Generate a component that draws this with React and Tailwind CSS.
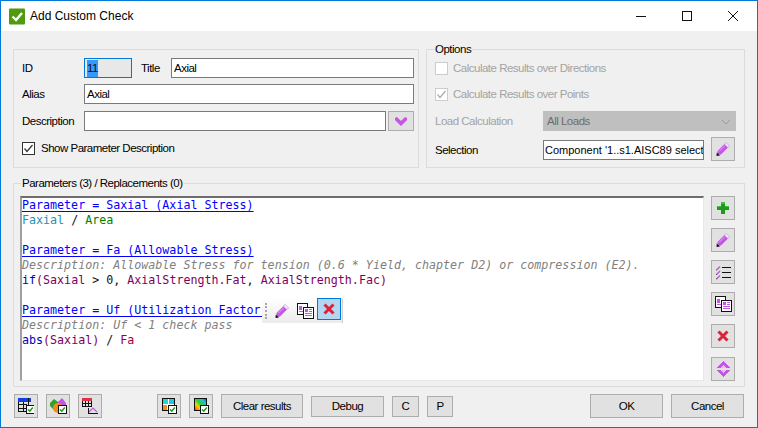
const UI = { fontFamily: '"Liberation Sans", Arial, sans-serif' };

const Pencil = () => (
  <svg width="16" height="16" viewBox="0 0 16 16">
    <path d="M2.500 10 9.500 3 13 6.500 6 13.500 2.500 14Z" fill="#c455e6" />
    <path d="M4 10.500 10 4.500" stroke="#e3a6f5" strokeWidth="1" />
    <path d="M9.500 3 11 1.500 14.500 5 13 6.500Z" fill="#fff" stroke="#c98ae0" strokeWidth=".8" />
    <path d="M1.500 15 1.800 11.500 5 14.500Z" fill="#111" />
  </svg>
);
const Plus = () => (
  <svg width="16" height="16" viewBox="0 0 16 16" shapeRendering="crispEdges">
    <path d="M6 2h4v4h4v4h-4v4H6v-4H2V6h4Z" fill="#1f9a1f" />
    <path d="M6 2h4v2H6ZM2 6h4v1H2ZM10 6h4v1h-4Z" fill="#3ec43e" />
  </svg>
);
const ListIcon = () => (
  <svg width="16" height="16" viewBox="0 0 16 16">
    <path d="M1.500 5 4.500 2 5.500 3 2.500 6Z M1.500 9.500 4.500 6.500 5.500 7.500 2.500 10.500Z M1.500 14 4.500 11 5.500 12 2.500 15Z" fill="#c455e6" />
    <path d="M1 5 1.500 6.500 2.500 6Z M1 9.500 1.500 11 2.500 10.500Z M1 14 1.500 15.500 2.500 15Z" fill="#111" />
    <path d="M7 3h9M7 8h9M7 13h9" stroke="#111" strokeWidth="1" shapeRendering="crispEdges" />
  </svg>
);
const Copy = () => (
  <svg width="17" height="16" viewBox="0 0 17 16" shapeRendering="crispEdges">
    <rect x=".5" y=".5" width="10" height="11" fill="#fff" stroke="#111" />
    <rect x="2" y="3" width="3" height="4" fill="#c455e6" />
    <path d="M2 8h5v1H2Z" fill="#c455e6" />
    <rect x="6.500" y="4" width="9.500" height="11.500" fill="#fff" stroke="#111" />
    <rect x="8" y="6" width="3" height="3" fill="#c455e6" />
    <path d="M12 6h3v1h-3ZM12 8h3v1h-3ZM8 10h7v1H8ZM8 12h7v1H8Z" fill="#c455e6" />
  </svg>
);
const XIcon = () => (
  <svg width="16" height="16" viewBox="0 0 16 16">
    <path d="M3.500 3.500 12.500 12.500M12.500 3.500 3.500 12.500" stroke="#dc2438" strokeWidth="3" />
  </svg>
);
const UpDown = () => (
  <svg width="16" height="18" viewBox="0 0 16 18" shapeRendering="crispEdges">
    <path d="M8 1 15 8H1Z M1 10H15L8 17Z" fill="#c455e6" />
    <path d="M8 5 11 8H5Z M5 10H11L8 13Z" fill="#e7bdf5" />
  </svg>
);
const Check = ({ x = 8, y = 7 }) => (
  <g transform={`translate(${x} ${y})`}>
    <rect x=".5" y=".5" width="8" height="8" fill="#fff" stroke="#111" />
    <path d="M2 4.500 3.800 6.200 6.800 2.500" fill="none" stroke="#1f9a1f" strokeWidth="1.600" shapeRendering="auto" />
  </g>
);
const TableIcon = () => (
  <svg width="16" height="16" viewBox="0 0 16 16" shapeRendering="crispEdges">
    <rect x="0" y="0" width="13" height="4" fill="#1540e0" />
    <path d="M.5 4v10M5.500 4v10M10.500 0v8M0 6.500h9M0 10.500h9M0 13.500h9" stroke="#111" fill="none" />
    <Check />
  </svg>
);
const ShapesIcon = () => (
  <svg width="17" height="16" viewBox="0 0 17 16">
    <path d="M0 5 4 1 8 4 8 11 4 12 0 8Z" fill="#33a02c" />
    <path d="M7 5 12 0 16 5 16 8 7 8Z" fill="#c455e6" />
    <circle cx="8" cy="10" r="5" fill="#f58a1f" />
    <Check x="8" y="7" />
  </svg>
);
const ChartIcon = () => (
  <svg width="16" height="16" viewBox="0 0 16 16" shapeRendering="crispEdges">
    <rect x="0" y="0" width="10" height="3" fill="#e0304a" />
    <path d="M.5 3v6M3.500 3v6M6.500 3v6M9.500 3v6M0 5.500h10M0 8.500h10" stroke="#111" fill="none" />
    <path d="M6 15.500h10" stroke="#111" />
    <path d="M7 14 11 10 15 14" fill="none" stroke="#c455e6" strokeWidth="1.200" shapeRendering="auto" />
    <path d="M6.500 10v6" stroke="#111" />
  </svg>
);
const ColorIcon = () => (
  <svg width="16" height="16" viewBox="0 0 16 16" shapeRendering="crispEdges">
    <rect x="1.500" y=".5" width="12" height="12" fill="#fff" stroke="#111" />
    <rect x="2" y="1" width="5" height="5" fill="#1fd7d7" />
    <rect x="8" y="1" width="5" height="5" fill="#1fc7e0" />
    <rect x="2" y="7" width="4" height="5" fill="#f58a1f" />
    <Check x="7" y="7" />
  </svg>
);
const RainbowIcon = () => (
  <svg width="16" height="16" viewBox="0 0 16 16">
    <defs>
      <linearGradient id="rb" x1="0" y1="1" x2="1" y2="0">
        <stop offset="0" stopColor="#ff2020" />
        <stop offset=".3" stopColor="#ffd000" />
        <stop offset=".55" stopColor="#20d040" />
        <stop offset=".78" stopColor="#20c0e0" />
        <stop offset="1" stopColor="#1030e0" />
      </linearGradient>
    </defs>
    <rect x="1.500" y=".5" width="12" height="12" fill="url(#rb)" stroke="#111" />
    <Check x="7" y="7" />
  </svg>
);

const F = "text-[11.500px] tracking-[-0.5px]";
const T = "text-[11.500px] tracking-[-0.5px] leading-[17px]";

const IconBtn = ({ children, className = "" }) => (
  <div className={`w-6 h-6 shrink-0 flex items-center justify-center bg-[#e1e1e1] border border-[#adadad] ${className}`}>
    {children}
  </div>
);
const TextBtn = ({ children, className = "" }) => (
  <div className={`flex items-center justify-center bg-[#e1e1e1] border border-[#adadad] ${T} text-black ${className}`}>
    {children}
  </div>
);
const Input = ({ children, className = "" }) => (
  <div className={`h-5 bg-white border border-[#7a7a7a] flex items-center pl-[2px] ${T} text-black overflow-hidden whitespace-nowrap ${className}`}>
    {children}
  </div>
);
const Box = ({ checked, disabled }) => (
  <div className={`w-[13px] h-[13px] shrink-0 flex items-center justify-center border ${disabled ? "border-[#cccccc] bg-white" : "border-[#333333] bg-white"}`}>
    {checked && (
      <svg width="11" height="11" viewBox="0 0 11 11">
        <path d="M1.500 5.500 4 8.500 9.500 2" fill="none" stroke={disabled ? "#aaaaaa" : "#333333"} strokeWidth="1.200" />
      </svg>
    )}
  </div>
);
const Legend = ({ children, className = "" }) => (
  <span className={`absolute -top-[8px] bg-[#f0f0f0] px-[1px] ${F} leading-[14px] text-black ${className}`}>{children}</span>
);

const P = ({ children }) => <div className="text-[#0000ff] underline underline-offset-2 h-[15px]">{children}</div>;
const D = ({ children }) => <div className="text-[#808080] italic h-[15px]">{children}</div>;
const L = ({ children }) => <div className="h-[15px]">{children}</div>;

export default function App() {
  return (
    <div style={UI} className="w-[758px] h-[428px] bg-[#f0f0f0] border border-[#0078d7] flex flex-col overflow-hidden">
      {/* title bar */}
      <div className="h-[30px] shrink-0 bg-white flex items-center pl-[8px]">
        <svg width="17" height="17" viewBox="0 0 17 17" className="shrink-0">
          <rect width="16" height="16" y=".5" rx="1" fill="#4f9a0f" />
          <path d="M3.500 8.500 7 12 13 5" fill="none" stroke="#fff" strokeWidth="2.400" />
        </svg>
        <span className="ml-[4px] text-[12px] text-black">Add Custom Check</span>
        <div className="ml-auto flex items-center h-full">
          <svg width="46" height="30" viewBox="0 0 46 30"><path d="M18 15.500h10" stroke="#111" /></svg>
          <svg width="46" height="30" viewBox="0 0 46 30"><rect x="18.500" y="10.500" width="9" height="9" fill="none" stroke="#111" /></svg>
          <svg width="46" height="30" viewBox="0 0 46 30" className="mr-[1px]"><path d="M18 10 28 20M28 10 18 20" stroke="#111" /></svg>
        </div>
      </div>

      <div className="flex-1 flex flex-col px-3 pt-[18px]">
        {/* top groups */}
        <div className="flex gap-[7px] h-[119px] shrink-0">
          <div className={`w-[406px] border border-[#dcdcdc] pl-[8px] pr-[4px] pt-[8px] ${T} text-black`}>
            <div className="flex items-center h-5">
              <span className="w-[62px]">ID</span>
              <div className="w-[48px] h-5 bg-[#e8e8e8] border border-[#0078d7] flex items-center pl-[2px]">
                <span className="bg-[#3399ff] text-[#111]">11</span>
              </div>
              <span className="ml-[9px] w-[30px]">Title</span>
              <Input className="flex-1">Axial</Input>
            </div>
            <div className="flex items-center h-5 mt-[6px]">
              <span className="w-[62px]">Alias</span>
              <Input className="flex-1">Axial</Input>
            </div>
            <div className="flex items-center h-5 mt-[7px]">
              <span className="w-[62px]">Description</span>
              <Input className="w-[302px]" />
              <div className="ml-[2px] flex-1 h-5 flex items-center justify-center bg-[#e1e1e1] border border-[#adadad]">
                <svg width="14" height="9" viewBox="0 0 14 9"><path d="M1 1 3 0 7 4 11 0 13 1 13 3 7 9 1 3Z" fill="#c455e6" /></svg>
              </div>
            </div>
            <div className="flex items-center mt-[9px]">
              <Box checked />
              <span className="ml-[6px]">Show Parameter Description</span>
            </div>
          </div>

          <div className={`relative w-[319px] border border-[#dcdcdc] pl-[8px] pr-[8px] pt-[11px] ${T}`}>
            <Legend className="left-[7px]">Options</Legend>
            <div className="flex items-center text-[#a3a3a3] h-[14px]">
              <Box disabled />
              <span className="ml-[5px]">Calculate Results over Directions</span>
            </div>
            <div className="flex items-center text-[#a3a3a3] h-[14px] mt-[12px]">
              <Box disabled checked />
              <span className="ml-[5px]">Calculate Results over Points</span>
            </div>
            <div className="flex items-center h-5 mt-[10px]">
              <span className="w-[108px] text-[#a3a3a3]">Load Calculation</span>
              <div className="flex-1 h-5 bg-[#bfbfbf] flex items-center justify-between pl-[4px] pr-[5px] pt-[1px] text-[#6d6d6d]">
                All Loads
                <svg width="10" height="6" viewBox="0 0 10 6"><path d="M1 1 5 5 9 1" fill="none" stroke="#9a9a9a" /></svg>
              </div>
            </div>
            <div className="flex items-center h-6 mt-[6px]">
              <span className="w-[108px] text-black pt-[3px]">Selection</span>
              <Input className="w-[161px] !pl-[1px] mt-[2px]"><span className="text-[11px] tracking-normal">Component '1..s1.AISC89 selection</span></Input>
              <IconBtn className="ml-[7px]"><Pencil /></IconBtn>
            </div>
          </div>
        </div>

        {/* parameters group */}
        <div className="relative mt-[15px] h-[204px] shrink-0 border border-[#dcdcdc] flex pl-[6px] pr-[9px] pt-[12px]">
          <Legend className="left-[7px]">Parameters (3) / Replacements (0)</Legend>
          <div
            style={{ fontFamily: '"DejaVu Sans Mono", monospace' }}
            className="relative w-[684px] h-[185px] bg-white border-t-2 border-l-2 border-t-[#6d6d6d] border-l-[#a0a0a0] border-r border-r-[#e8e8e8] border-b border-b-[#e8e8e8] text-[11.670px] leading-[15px] text-[#111]"
          >
            <P>Parameter = Saxial (Axial Stress)</P>
            <L><span className="text-[#2b91af]">Faxial</span> / <span className="text-[#008000]">Area</span></L>
            <L />
            <P>Parameter = Fa (Allowable Stress)</P>
            <D>Description: Allowable Stress for tension (0.6 * Yield, chapter D2) or compression (E2).</D>
            <L>
              <span className="text-[#0000c0]">if</span><span className="text-[#800060]">(Saxial</span> &gt; 0, <span className="text-[#800060]">AxialStrength.Fat</span>, <span className="text-[#800060]">AxialStrength.Fac</span><span className="text-[#800060]">)</span>
            </L>
            <L />
            <P>Parameter = Uf (Utilization Factor)</P>
            <D>Description: Uf &lt; 1 check pass</D>
            <L>
              <span className="text-[#0000c0]">abs</span><span className="text-[#800060]">(Saxial)</span> / <span className="text-[#a00040]">Fa</span>
            </L>

            {/* floating toolbar */}
            <div className="absolute left-[240px] top-[100px] w-[81px] h-[25px] bg-gradient-to-b from-white to-[#ececec] border-r border-r-[#d0d0d0] flex items-center">
              <div className="ml-[3px] w-[2px] h-[16px] border-l-2 border-dotted border-[#a8a8a8]" />
              <div className="ml-[7px]"><Pencil /></div>
              <div className="ml-[7px]"><Copy /></div>
              <div className="ml-[3px] w-6 h-[22px] self-start flex items-center justify-center bg-[#b3d7f3] border border-[#0078d7]"><XIcon /></div>
            </div>
          </div>
          <div className="ml-[7px] flex flex-col">
            <IconBtn><Plus /></IconBtn>
            <IconBtn className="mt-2"><Pencil /></IconBtn>
            <IconBtn className="mt-2"><ListIcon /></IconBtn>
            <IconBtn className="mt-2"><Copy /></IconBtn>
            <IconBtn className="mt-2"><XIcon /></IconBtn>
            <IconBtn className="mt-[9px]"><UpDown /></IconBtn>
          </div>
        </div>

        {/* footer */}
        <div className="flex items-start mt-[7px] pl-[1px] pr-[1px] h-6">
          <IconBtn><TableIcon /></IconBtn>
          <IconBtn className="ml-2"><ShapesIcon /></IconBtn>
          <IconBtn className="ml-2"><ChartIcon /></IconBtn>
          <IconBtn className="ml-[55px]"><ColorIcon /></IconBtn>
          <IconBtn className="ml-2"><RainbowIcon /></IconBtn>
          <TextBtn className="ml-2 w-[82px] h-6">Clear results</TextBtn>
          <TextBtn className="ml-2 w-[73px] h-[21px] mt-[2px]">Debug</TextBtn>
          <TextBtn className="ml-2 w-[27px] h-[21px] mt-[2px]">C</TextBtn>
          <TextBtn className="ml-2 w-[26px] h-[21px] mt-[2px]">P</TextBtn>
          <TextBtn className="ml-auto w-[73px] h-6">OK</TextBtn>
          <TextBtn className="ml-2 w-[73px] h-6">Cancel</TextBtn>
        </div>
      </div>
    </div>
  );
}
